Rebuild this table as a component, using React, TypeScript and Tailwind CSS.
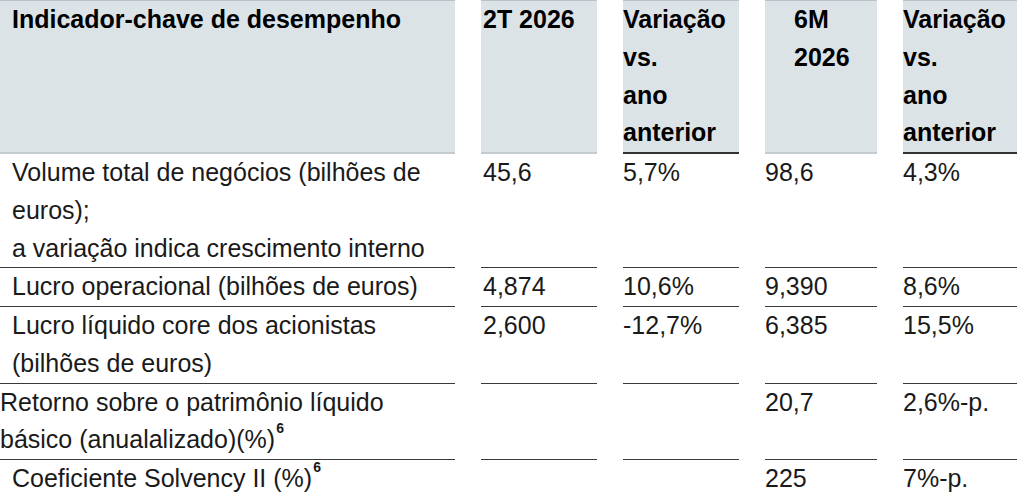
import React from 'react';

type Row = {
  label: React.ReactNode;
  indent?: boolean;
  values: string[];
};

const Sup = () => <sup className="text-[14px] font-bold align-[8px] leading-none ml-[1px]">6</sup>;

const rows: Row[] = [
  {
    label: (
      <>
        Volume total de negócios (bilhões de euros);
        <br />a variação indica crescimento interno
      </>
    ),
    indent: true,
    values: ['45,6', '5,7%', '98,6', '4,3%'],
  },
  { label: 'Lucro operacional (bilhões de euros)', indent: true, values: ['4,874', '10,6%', '9,390', '8,6%'] },
  {
    label: (
      <>
        Lucro líquido core dos acionistas
        <br />
        (bilhões de euros)
      </>
    ),
    indent: true,
    values: ['2,600', '-12,7%', '6,385', '15,5%'],
  },
  {
    label: (
      <>
        Retorno sobre o patrimônio líquido
        <br />
        básico (anualalizado)(%)
        <Sup />
      </>
    ),
    values: ['', '', '20,7', '2,6%-p.'],
  },
  {
    label: (
      <>
        Coeficiente Solvency II (%)
        <Sup />
      </>
    ),
    indent: true,
    values: ['', '', '225', '7%-p.'],
  },
];

export default function App() {
  const head = 'bg-[#dbe3e7] border-t border-t-[#b9c2c7] font-bold text-black';
  const rule = 'border-b-[1.5px] border-b-[#3a3a3a]';

  return (
    <div className="w-[1017px] h-[500px] overflow-hidden bg-white text-[#1a1a1a] text-[25px] leading-[37.75px] font-['Liberation_Sans',Arial,sans-serif]">
      <div className="grid grid-cols-[455px_116px_116px_112px_1fr] gap-x-[26px]">
        {/* header */}
        <div className={`${head} pl-3 border-b-2 border-b-[#c3cbcf]`}>Indicador-chave de desempenho</div>
        <div className={`${head} pl-[2px] border-b-2 border-b-[#c3cbcf]`}>2T 2026</div>
        <div className={`${head} border-b-2 border-b-[#333333]`}>
          Variação
          <br />
          vs.
          <br />
          ano
          <br />
          anterior
        </div>
        <div className={`${head} pl-[29px] border-b-2 border-b-[#c3cbcf]`}>
          6M
          <br />
          2026
        </div>
        <div className={`${head} border-b-2 border-b-[#333333]`}>
          Variação
          <br />
          vs.
          <br />
          ano
          <br />
          anterior
        </div>

        {rows.map((row, i) => {
          const last = i === rows.length - 1;
          const b = last ? '' : rule;
          return (
            <React.Fragment key={i}>
              <div className={`${b} ${row.indent ? 'pl-3' : ''}`}>{row.label}</div>
              <div className={`${b} pl-[2px]`}>{row.values[0]}</div>
              <div className={b}>{row.values[1]}</div>
              <div className={b}>{row.values[2]}</div>
              <div className={b}>{row.values[3]}</div>
            </React.Fragment>
          );
        })}
      </div>
    </div>
  );
}
